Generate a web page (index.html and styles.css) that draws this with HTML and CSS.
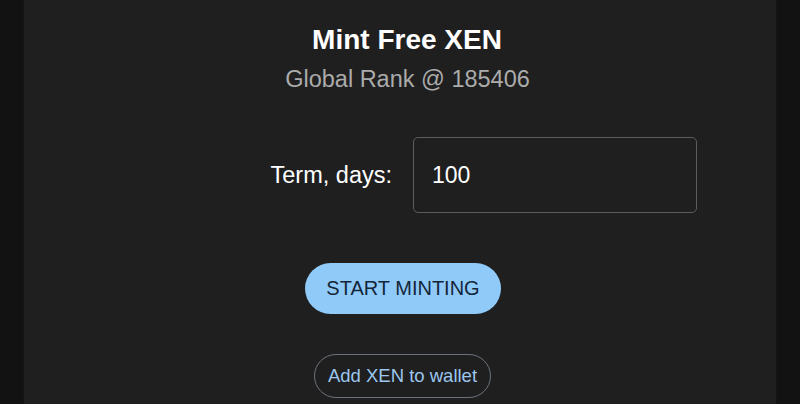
FILE: index.html
```html
<!DOCTYPE html>
<html lang="en">
<head>
  <meta charset="UTF-8" />
  <meta name="viewport" content="width=device-width, initial-scale=1.0"/>
  <title>Mint Free XEN</title>
  <link rel="stylesheet" href="styles.css">
</head>
<body>
  <div class="page">
    <main class="panel">
      <h1 class="title">Mint Free XEN</h1>
      <p class="rank">Global Rank @ 185406</p>

      <div class="term-row">
        <label class="term-label" for="term">Term, days:</label>
        <div class="term-field">
          <input id="term" class="term-input" type="text" value="100">
        </div>
      </div>

      <button class="btn btn-mint">Start Minting</button>
      <button class="btn btn-wallet">Add XEN to wallet</button>
    </main>
  </div>
</body>
</html>
```

FILE: styles.css
```css
:root {
  --bg-dark: #121212;
  --panel: #1f1f1f;
  --primary: #90caf9;
  --text: #ffffff;
  --text-muted: #ababab;
}

* {
  box-sizing: border-box;
}

body {
  margin: 0;
  font-family: 'Liberation Sans', Arial, sans-serif;
  background: var(--bg-dark);
  color: var(--text);
}

.page {
  padding: 0 24px;
  min-height: 100vh;
}

.panel {
  background: var(--panel);
  min-height: 100vh;
  padding-top: 24px;
  display: flex;
  flex-direction: column;
  align-items: center;
  box-shadow: 0 0 2px rgba(255, 255, 255, 0.05);
}

.title {
  margin: 0 0 0 14px;
  font-size: 28px;
  line-height: 32px;
  font-weight: bold;
}

.rank {
  margin: 9px 0 0 15px;
  font-size: 23.5px;
  line-height: 28px;
  color: var(--text-muted);
}

.term-row {
  margin-top: 44px;
  width: 100%;
  display: grid;
  grid-template-columns: 1fr 1fr;
  align-items: center;
}

.term-label {
  text-align: right;
  padding-right: 8px;
  font-size: 23.5px;
}

.term-field {
  padding-left: 13px;
}

.term-input {
  width: 284px;
  height: 76px;
  background: transparent;
  border: 1px solid #5c5c5c;
  border-radius: 5px;
  padding: 0 0 0 18px;
  color: var(--text);
  font-family: inherit;
  font-size: 23px;
  outline: none;
}

.btn {
  font-family: inherit;
  cursor: pointer;
  border-radius: 999px;
}

.btn-mint {
  margin: 50px 0 0 6px;
  width: 196px;
  height: 51px;
  border: none;
  background: var(--primary);
  color: #15263a;
  font-size: 20px;
  text-transform: uppercase;
}

.btn-wallet {
  margin: 40px 0 0 5px;
  width: 177px;
  height: 44px;
  background: transparent;
  border: 1px solid #6b737c;
  color: #9cc6ee;
  font-size: 18.5px;
}
```
